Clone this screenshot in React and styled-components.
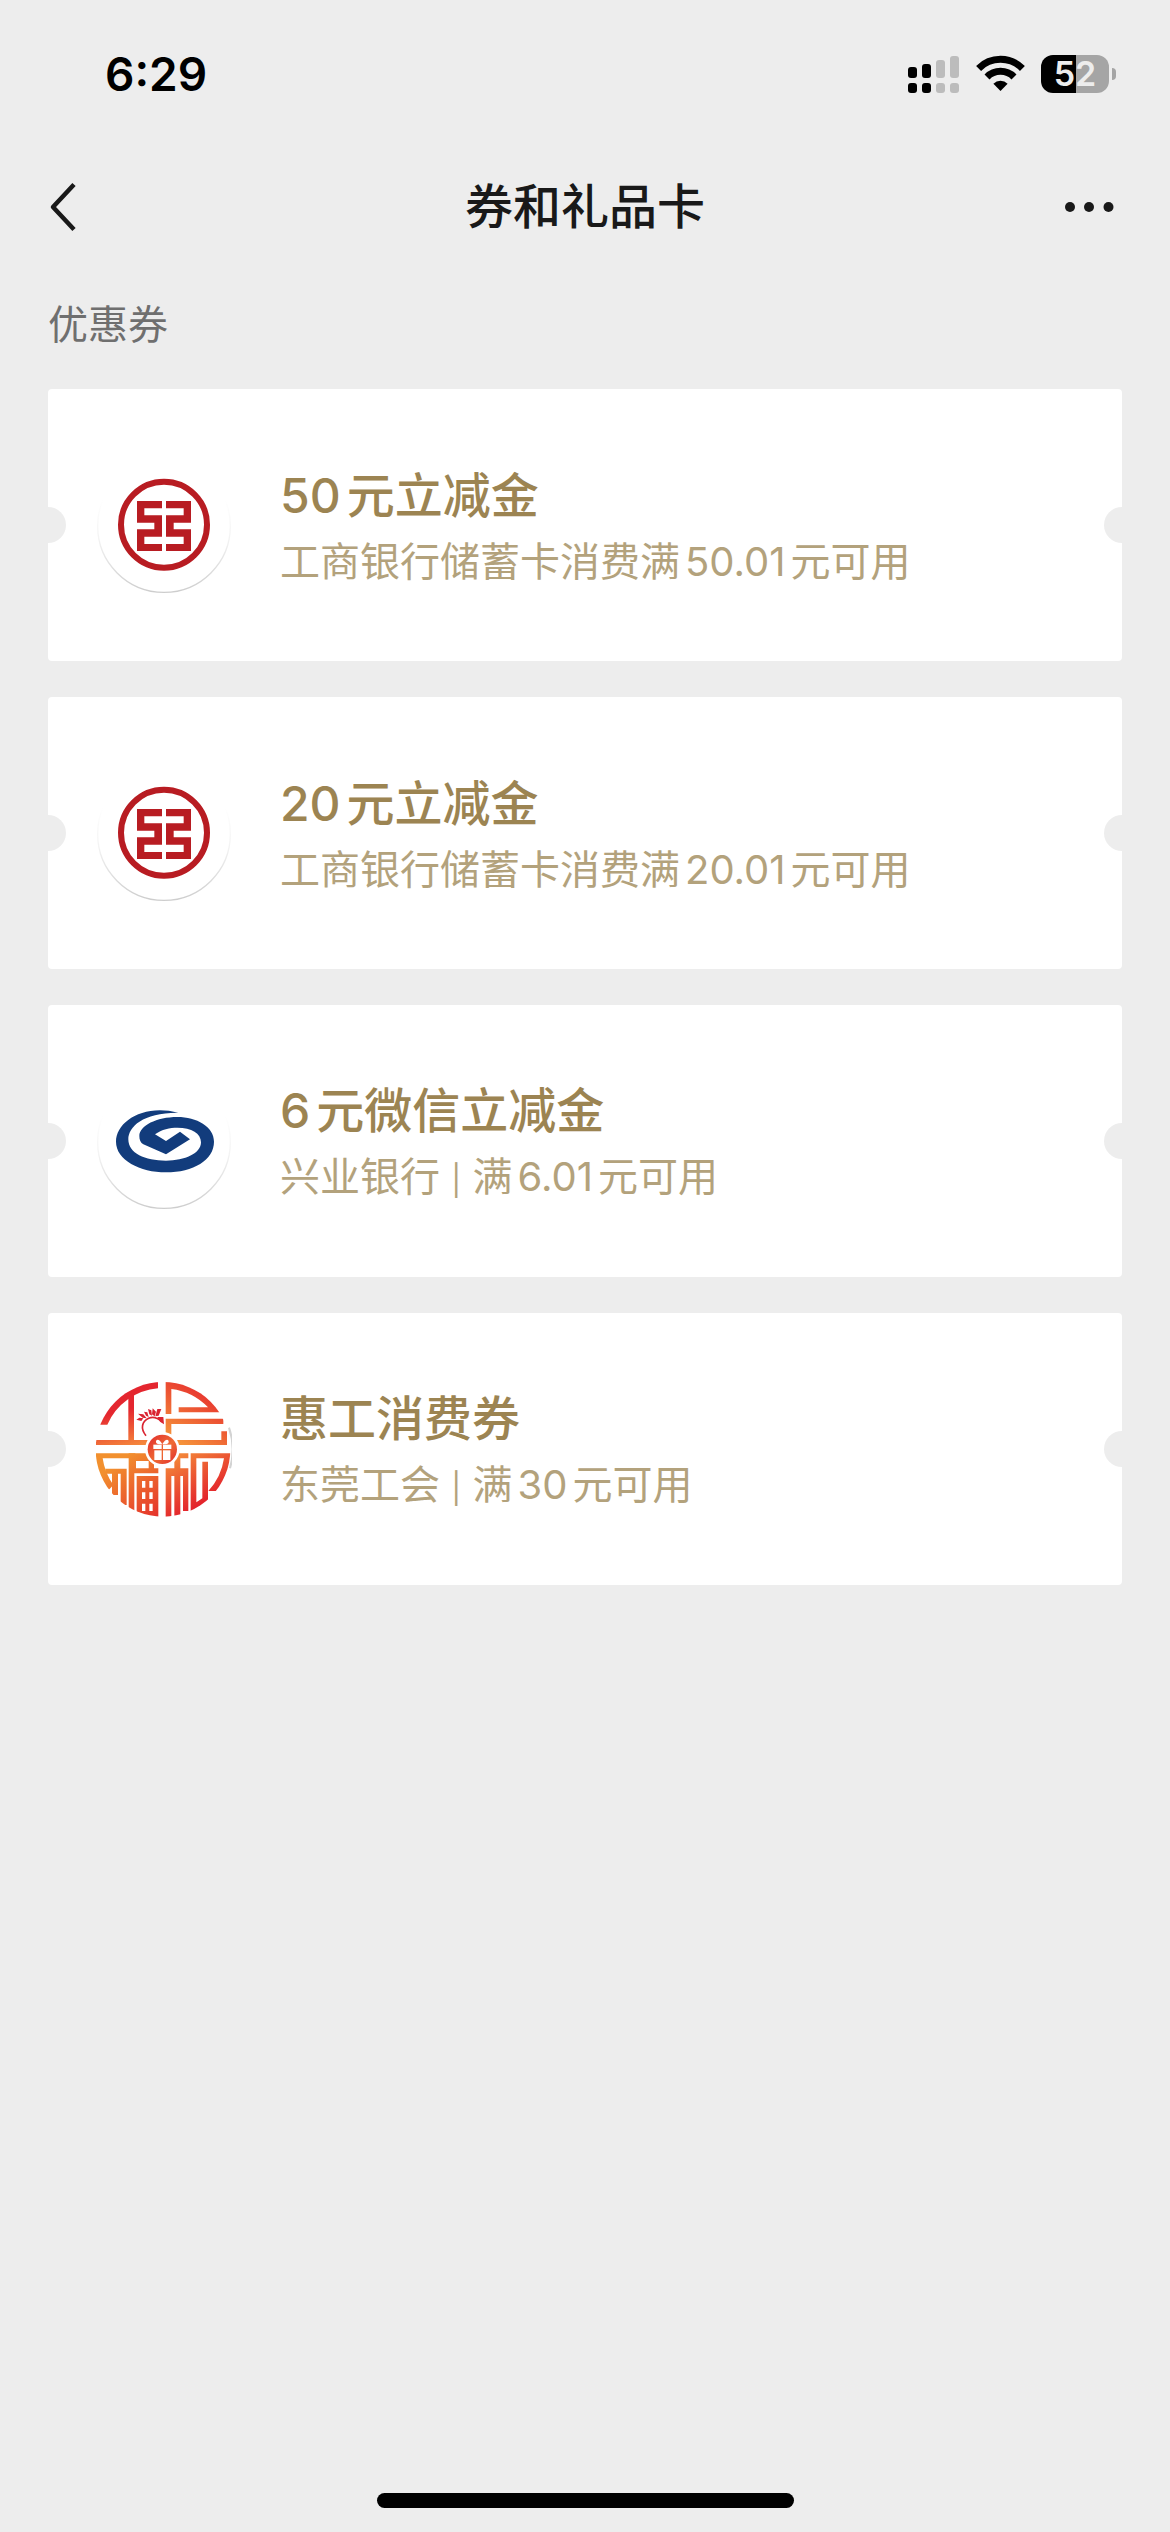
import styled, { createGlobalStyle } from "styled-components";

const GlobalStyle = createGlobalStyle`
  * {
    box-sizing: border-box;
  }

  body {
    margin: 0;
    background: #ededed;
    font-family: Inter, "Noto Sans CJK SC", sans-serif;
    text-autospace: normal;
  }
`;

const Screen = styled.div`
  display: flex;
  flex-direction: column;
  min-height: 100vh;
  background: #ededed;
`;

const StatusBar = styled.div`
  display: flex;
  align-items: center;
  justify-content: space-between;
  height: 141px;
  padding: 6px 54px 0 105px;
`;

const Time = styled.time`
  font-size: 46px;
  font-weight: 600;
  line-height: 60px;
  color: #000;
`;

const StatusIcons = styled.div`
  display: flex;
  align-items: center;
  gap: 16px;
`;

const Battery = styled.div`
  display: flex;
  align-items: center;
  gap: 3px;
`;

const BatteryBody = styled.div`
  display: flex;
  align-items: center;
  justify-content: center;
  width: 68px;
  height: 38px;
  border-radius: 12px;
  background: linear-gradient(to right, #000 52%, #a5a5a5 52%);
  color: #ededed;
  font-size: 34px;
  font-weight: 600;
  line-height: 38px;
`;

const BatteryTip = styled.div`
  width: 4px;
  height: 12px;
  border-radius: 0 4px 4px 0;
  background: #a5a5a5;
`;

const NavBar = styled.header`
  display: grid;
  grid-template-columns: 80px 1fr 80px;
  align-items: center;
  height: 132px;
  padding: 0 48px;
`;

const NavButton = styled.button`
  display: flex;
  justify-content: ${(props) => (props.$end ? "flex-end" : "flex-start")};
  align-items: center;
  height: 80px;
  padding: 0;
  border: 0;
  background: none;
  color: #191919;
`;

const PageTitle = styled.h1`
  margin: 0;
  font-size: 48px;
  font-weight: 500;
  line-height: 72px;
  text-align: center;
  color: #191919;
`;

const Content = styled.main`
  flex: 1;
  padding: 22px 48px 0;
`;

const SectionTitle = styled.h2`
  margin: 0 0 34px;
  font-size: 40px;
  font-weight: 400;
  line-height: 60px;
  color: #6f6f6f;
`;

const CouponList = styled.ul`
  display: flex;
  flex-direction: column;
  gap: 36px;
  margin: 0;
  padding: 0;
  list-style: none;
`;

const Coupon = styled.li`
  position: relative;
  overflow: hidden;
  display: flex;
  align-items: center;
  gap: 48px;
  height: 272px;
  padding: 2px 48px 0;
  border-radius: 4px;
  background: #fff;

  &::before,
  &::after {
    content: "";
    position: absolute;
    top: 50%;
    width: 36px;
    height: 36px;
    margin-top: -18px;
    border-radius: 50%;
    background: #ededed;
  }

  &::before {
    left: -18px;
  }

  &::after {
    right: -18px;
  }
`;

const CouponText = styled.div`
  flex: 1;
`;

const CouponTitle = styled.h3`
  margin: 0;
  font-size: 48px;
  font-weight: 500;
  line-height: 72px;
  color: #9c8452;
`;

const CouponDesc = styled.p`
  margin: 0;
  font-size: 40px;
  font-weight: 400;
  line-height: 60px;
  color: #b3a27c;
`;

const Divider = styled.span`
  font-size: 30px;
`;

const HomeIndicator = styled.div`
  align-self: center;
  width: 417px;
  height: 15px;
  margin: 24px 0;
  border-radius: 8px;
  background: #000;
`;

const SignalIcon = () => (
  <svg width="52" height="38" viewBox="0 0 52 38" aria-hidden="true">
    <g fill="#000">
      <rect x="0" y="12" width="9" height="11" rx="3" />
      <rect x="14" y="9" width="9" height="14" rx="3" />
      <rect x="0" y="28" width="9" height="10" rx="3" />
      <rect x="14" y="28" width="9" height="10" rx="3" />
    </g>
    <g fill="#bcbcbc">
      <rect x="28" y="5" width="9" height="18" rx="3" />
      <rect x="42" y="1" width="9" height="22" rx="3" />
      <rect x="28" y="28" width="9" height="10" rx="3" />
      <rect x="42" y="28" width="9" height="10" rx="3" />
    </g>
  </svg>
);

const WifiIcon = () => (
  <svg width="49" height="37" viewBox="0 0 49 37" aria-hidden="true">
    <g fill="none" stroke="#000" strokeWidth="7">
      <path d="M2.6 13.4A31 31 0 0 1 46.4 13.4" />
      <path d="M11 22A19 19 0 0 1 38 22" />
    </g>
    <path d="M17.4 28.7A10 10 0 0 1 31.6 28.7L24.5 36Z" fill="#000" />
  </svg>
);

const BackIcon = () => (
  <svg width="30" height="50" viewBox="0 0 30 50" aria-hidden="true">
    <path
      d="M26 2.5L5 25L26 47.5"
      fill="none"
      stroke="currentColor"
      strokeWidth="4.5"
      strokeLinejoin="round"
    />
  </svg>
);

const MoreIcon = () => (
  <svg width="58" height="12" viewBox="0 0 58 12" aria-hidden="true">
    <g fill="currentColor">
      <circle cx="6" cy="6" r="5" />
      <circle cx="25" cy="6" r="5" />
      <circle cx="44.5" cy="6" r="5" />
    </g>
  </svg>
);

const LogoPlate = ({ id }) => (
  <>
    <defs>
      <linearGradient id={id} x1="0" y1="0" x2="0" y2="1">
        <stop offset="0.3" stopColor="#fff" />
        <stop offset="0.6" stopColor="#f3f3f3" />
        <stop offset="1" stopColor="#cdcdcd" />
      </linearGradient>
    </defs>
    <circle cx="204" cy="204" r="199" fill="#fff" stroke={`url(#${id})`} strokeWidth="4" />
  </>
);

const IcbcLogo = ({ id }) => (
  <svg width="136" height="136" viewBox="0 0 408 408" aria-hidden="true">
    <LogoPlate id={id} />
    <g transform="translate(-18 6)">
      <circle cx="222" cy="194" r="129" fill="none" stroke="#b81c22" strokeWidth="18" />
      <path
        d="M141 123H216V145H163V166H216V230H163V252H216V273H141V208H193V188H141Z
           M303 123H228V145H281V166H228V230H281V252H228V273H303V208H251V188H303Z"
        fill="#b81c22"
      />
    </g>
  </svg>
);

const CibLogo = ({ id }) => (
  <svg width="136" height="136" viewBox="0 0 408 408" aria-hidden="true">
    <LogoPlate id={id} />
    <path
      transform="translate(-18 18)"
      d="M265 98C160 70 78 125 78 185C78 240 150 277 228 277C310 277 372 240 372 185
         C372 140 320 111 262 111C200 111 148 137 148 168C148 180 152 188 160 193
         L228 223L300 178L270 155L228 183L195 163C215 148 240 143 262 143
         C305 143 333 160 333 187C333 220 285 242 228 242C165 242 115 220 115 178
         C115 140 160 97 265 98Z"
      fill="#123c7c"
    />
  </svg>
);

const UnionLogo = () => (
  <svg width="136" height="136" viewBox="0 3 408 408" aria-hidden="true">
    <defs>
      <linearGradient id="union-tl" gradientUnits="userSpaceOnUse" x1="70" y1="40" x2="110" y2="200">
        <stop offset="0.3" stopColor="#e4262f" />
        <stop offset="1" stopColor="#f58a3c" />
      </linearGradient>
      <linearGradient id="union-tr" gradientUnits="userSpaceOnUse" x1="360" y1="30" x2="260" y2="190">
        <stop offset="0" stopColor="#e62a2e" />
        <stop offset="1" stopColor="#f5923a" />
      </linearGradient>
      <linearGradient id="union-bl" gradientUnits="userSpaceOnUse" x1="70" y1="240" x2="190" y2="400">
        <stop offset="0" stopColor="#f2902e" />
        <stop offset="1" stopColor="#e5332c" />
      </linearGradient>
      <linearGradient id="union-br" gradientUnits="userSpaceOnUse" x1="220" y1="220" x2="310" y2="370">
        <stop offset="0" stopColor="#f5903a" />
        <stop offset="1" stopColor="#e3242c" />
      </linearGradient>
      <linearGradient id="union-gift" x1="0" y1="0" x2="1" y2="1">
        <stop offset="0" stopColor="#e12a2e" />
        <stop offset="0.55" stopColor="#ef6b33" />
        <stop offset="1" stopColor="#e12a2e" />
      </linearGradient>
      <clipPath id="union-disc">
        <circle cx="201" cy="205" r="202" />
      </clipPath>
    </defs>
    <path d="M399 140A205 205 0 0 1 402 262" fill="none" stroke="#d3d3d3" strokeWidth="6" />
    <g clipPath="url(#union-disc)">
      <g fill="url(#union-tl)">
        <path d="M0 131V0H186V22A183 183 0 0 0 34 131Z" />
        <rect x="97" y="40" width="17" height="140" />
        <rect x="0" y="177" width="157" height="15" />
      </g>
      <g fill="url(#union-tr)">
        <path d="M209 0H320L392 94H248V79H336A183 183 0 0 0 226 24V99H209Z" />
        <path d="M209 113H382V129H226V161H209Z" />
        <path d="M376 151H393V192H237V177H376Z" />
      </g>
      <g fill="url(#union-bl)">
        <path d="M0 217H118V232H20A183 183 0 0 0 52 312L40 325H0Z" />
        <path d="M28 263H92V372H74V278H66V342H48V278H28Z" />
        <path
          fillRule="evenodd"
          d="M98 217H187V232H174V262H187V277H115V400H98ZM120 240V262H158V240Z"
        />
        <path
          fillRule="evenodd"
          d="M122 285H187V408H122ZM138 300V320H148V300ZM160 300V320H170V300ZM138 334V354H148V334ZM160 334V354H170V334ZM138 368V390H148V368ZM160 368V390H170V368Z"
        />
      </g>
      <g fill="url(#union-br)">
        <path d="M235 217H277V232H253V262H277V390H261V285H253V408H235V285H226V408H209V262H235Z" />
        <path d="M284 217H408V330H337A183 183 0 0 0 384 232H301V364L319 352V242H336V366L284 404Z" />
      </g>
    </g>
    <path
      d="M150 164C132 142 138 122 158 112C170 106 182 108 198 122"
      fill="none"
      stroke="#da2431"
      strokeWidth="5"
    />
    <path
      d="M121 116L130 110L142 112L136 120ZM126 98L142 100L152 112L140 110ZM144 92L154 94L158 108L150 104Z
         M156 84L166 88L168 104L160 100ZM170 82L180 92L176 106L168 100ZM184 84L196 84L188 104L178 106Z
         M184 108L202 108L204 130L192 122Z"
      fill="#da2431"
    />
    <circle cx="199" cy="205" r="52" fill="#fff" />
    <circle cx="199" cy="205" r="44" fill="url(#union-gift)" />
    <g fill="#fff">
      <rect x="172" y="191" width="25" height="13" />
      <rect x="201" y="191" width="25" height="13" />
      <rect x="175" y="208" width="22" height="29" />
      <rect x="201" y="208" width="22" height="29" />
      <path d="M199 190C190 172 180 174 180 182C180 190 190 190 199 190ZM199 190C208 172 218 174 218 182C218 190 208 190 199 190Z" />
    </g>
  </svg>
);

const coupons = [
  {
    id: "icbc-50",
    title: "50元立减金",
    desc: "工商银行储蓄卡消费满50.01元可用",
    Logo: IcbcLogo,
  },
  {
    id: "icbc-20",
    title: "20元立减金",
    desc: "工商银行储蓄卡消费满20.01元可用",
    Logo: IcbcLogo,
  },
  {
    id: "cib-6",
    title: "6元微信立减金",
    issuer: "兴业银行",
    desc: "满6.01元可用",
    Logo: CibLogo,
  },
  {
    id: "union-30",
    title: "惠工消费券",
    issuer: "东莞工会",
    desc: "满30元可用",
    Logo: UnionLogo,
  },
];

const App = () => {
  return (
    <Screen>
      <GlobalStyle />
      <StatusBar>
        <Time>6:29</Time>
        <StatusIcons>
          <SignalIcon />
          <WifiIcon />
          <Battery>
            <BatteryBody>52</BatteryBody>
            <BatteryTip />
          </Battery>
        </StatusIcons>
      </StatusBar>
      <NavBar>
        <NavButton type="button" aria-label="返回">
          <BackIcon />
        </NavButton>
        <PageTitle>券和礼品卡</PageTitle>
        <NavButton type="button" aria-label="更多" $end>
          <MoreIcon />
        </NavButton>
      </NavBar>
      <Content>
        <SectionTitle>优惠券</SectionTitle>
        <CouponList>
          {coupons.map(({ id, title, issuer, desc, Logo }) => (
            <Coupon key={id}>
              <Logo id={`plate-${id}`} />
              <CouponText>
                <CouponTitle>{title}</CouponTitle>
                <CouponDesc>
                  {issuer && (
                    <>
                      {issuer} <Divider>|</Divider>{" "}
                    </>
                  )}
                  {desc}
                </CouponDesc>
              </CouponText>
            </Coupon>
          ))}
        </CouponList>
      </Content>
      <HomeIndicator />
    </Screen>
  );
};

export default App;
